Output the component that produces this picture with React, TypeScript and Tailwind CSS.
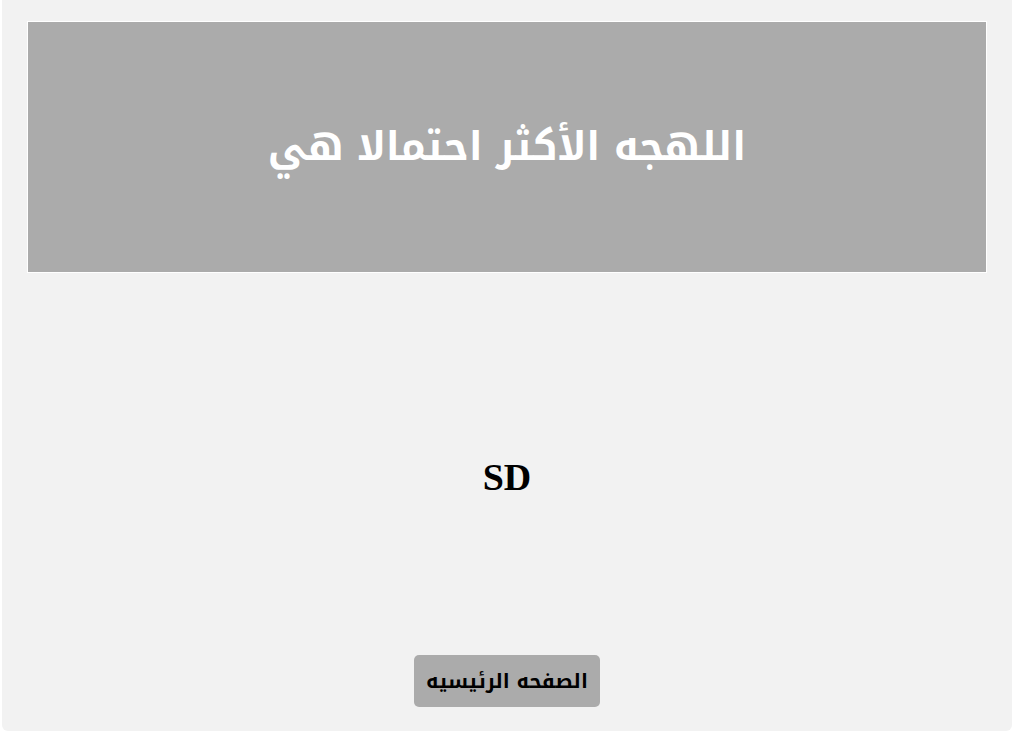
import React from "react";

const App = () => {
  return (
    <div className="min-h-screen bg-white">
      <div className="mx-[2px] flex h-[731px] w-[1010px] flex-col items-center rounded-b-md bg-[#f2f2f2] pt-[21px]">
        <div className="flex h-[252px] w-[960px] items-center justify-center border border-white bg-[#ababab]">
          <h1
            dir="rtl"
            className="font-['Noto_Kufi_Arabic',sans-serif] text-[40px] font-bold leading-none text-white"
          >
            اللهجه الأكثر احتمالا هي
          </h1>
        </div>

        <div className="mt-[182px] h-[44px] font-['Liberation_Serif',serif] text-[38px] font-bold leading-[44px] text-black">
          SD
        </div>

        <button
          dir="rtl"
          className="mt-[156px] flex h-[52px] w-[186px] items-center justify-center rounded-[5px] bg-[#ababab] font-['Noto_Kufi_Arabic',sans-serif] text-[20px] font-bold leading-none text-black"
        >
          الصفحه الرئيسيه
        </button>
      </div>
    </div>
  );
};

export default App;
